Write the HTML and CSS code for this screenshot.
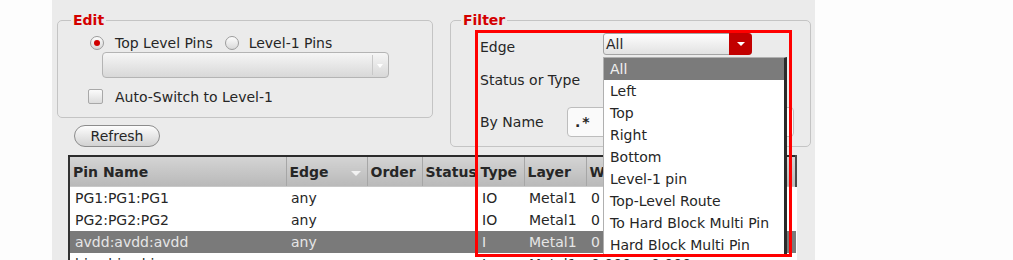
FILE: index.html
```html
<!DOCTYPE html>
<html lang="en">
<head>
  <meta charset="UTF-8" />
  <meta name="viewport" content="width=device-width, initial-scale=1.0"/>
  <title>Pin Editor</title>
  <link rel="stylesheet" href="styles.css">
</head>
<body>

<div class="app">
  <div class="top">
    <div class="left-col">
      <fieldset class="group edit">
        <legend>Edit</legend>
        <div class="radios">
          <span class="radio on"></span><span class="radio-label">Top Level Pins</span>
          <span class="radio second"></span><span class="radio-label second">Level-1 Pins</span>
        </div>
        <div class="combo plain"><span class="combo-arrow"></span></div>
        <div class="check-row"><span class="checkbox"></span>Auto-Switch to Level-1</div>
      </fieldset>
      <button class="btn">Refresh</button>
    </div>

    <fieldset class="group filter">
      <legend>Filter</legend>
      <div class="frow edge-row">
        <span class="flabel">Edge</span>
        <div class="red-combo">All<span class="red-btn"></span></div>
      </div>
      <div class="frow status-row"><span class="flabel">Status or Type</span></div>
      <div class="frow name-row">
        <span class="flabel">By Name</span>
        <div class="name-input">.*</div>
      </div>
    </fieldset>
  </div>

  <table class="pins">
    <colgroup>
      <col style="width:217px"><col style="width:81px"><col style="width:55px">
      <col style="width:55px"><col style="width:47px"><col style="width:62px">
      <col style="width:60px"><col style="width:60px"><col style="width:90px">
    </colgroup>
    <thead>
      <tr>
        <th>Pin Name</th>
        <th>Edge<span class="sort"></span></th>
        <th>Order</th>
        <th>Status</th>
        <th>Type</th>
        <th>Layer</th>
        <th>Width</th>
        <th>Depth</th>
        <th class="last">Spacer</th>
      </tr>
    </thead>
    <tbody>
      <tr><td>PG1:PG1:PG1</td><td>any</td><td></td><td></td><td>IO</td><td>Metal1</td><td>0</td><td></td><td></td></tr>
      <tr><td>PG2:PG2:PG2</td><td>any</td><td></td><td></td><td>IO</td><td>Metal1</td><td>0</td><td></td><td></td></tr>
      <tr class="sel"><td>avdd:avdd:avdd</td><td>any</td><td></td><td></td><td>I</td><td>Metal1</td><td>0</td><td></td><td></td></tr>
      <tr><td>bias:bias:bias</td><td>any</td><td></td><td></td><td>I</td><td>Metal1</td><td>0.000</td><td>0.000</td><td></td></tr>
    </tbody>
  </table>

  <ul class="popup">
    <li class="active">All</li>
    <li>Left</li>
    <li>Top</li>
    <li>Right</li>
    <li>Bottom</li>
    <li>Level-1 pin</li>
    <li>Top-Level Route</li>
    <li>To Hard Block Multi Pin</li>
    <li>Hard Block Multi Pin</li>
  </ul>

  <div class="highlight"></div>
</div>

</body>
</html>
```

FILE: styles.css
```css
body {
  margin: 0;
  background: #fdfdfd;
  font-family: "DejaVu Sans", sans-serif;
  font-size: 14px;
  color: #262626;
}

.app {
  position: relative;
  margin-left: 52px;
  width: 763px;
  height: 260px;
  background: #ebebeb;
  overflow: hidden;
}

.top {
  display: flex;
  gap: 17px;
  height: 147px;
  padding: 12px 0 0 5px;
  box-sizing: border-box;
}

.left-col {
  width: 376px;
}

/* group boxes */
.group {
  margin: 0;
  border: 1px solid #c4c4c4;
  border-radius: 5px;
}
.group legend {
  padding: 0 2px;
  color: #d40000;
  font-weight: bold;
  line-height: 16px;
}

.edit {
  padding: 6px 0 12px 13px;
}
.filter {
  width: 361px;
  box-sizing: border-box;
  padding: 5px 15px 7px 10px;
}

/* radios */
.radios {
  display: flex;
  align-items: center;
  height: 18px;
}
.radio {
  width: 14px;
  height: 14px;
  box-sizing: border-box;
  border: 1px solid #9c9c9c;
  border-radius: 50%;
  background: linear-gradient(#fdfdfd, #d9d9d9);
  margin-left: 19px;
  position: relative;
}
.radio.second { margin-left: 12px; }
.radio.on::after {
  content: "";
  position: absolute;
  left: 3px;
  top: 3px;
  width: 6px;
  height: 6px;
  border-radius: 50%;
  background: #d00000;
}
.radio-label { margin-left: 11px; }
.radio-label.second { margin-left: 10px; }

/* edit combo */
.combo {
  position: relative;
  margin-left: 31px;
  width: 287px;
  height: 26px;
  box-sizing: border-box;
  border: 1px solid #b4b4b4;
  border-radius: 4px;
  background: linear-gradient(#f6f6f6, #d8d8d8);
}
.combo-arrow {
  position: absolute;
  right: 0;
  top: 2px;
  width: 15px;
  height: 20px;
  border-left: 1px solid #c8c8c8;
}
.combo-arrow::after {
  content: "";
  position: absolute;
  left: 4px;
  top: 9px;
  border-left: 3px solid transparent;
  border-right: 3px solid transparent;
  border-top: 4px solid #fff;
}

.check-row {
  display: flex;
  align-items: center;
  height: 17px;
  margin-top: 10px;
}
.checkbox {
  width: 15px;
  height: 15px;
  box-sizing: border-box;
  border: 1px solid #a8a8a8;
  border-radius: 2px;
  background: linear-gradient(#fbfbfb, #dcdcdc);
  margin: 0 12px 0 17px;
}

.btn {
  display: block;
  margin: 7px 0 0 17px;
  width: 86px;
  height: 22px;
  padding: 0;
  border: 1px solid #8c8c8c;
  border-radius: 11px;
  background: linear-gradient(#fdfdfd, #d2d2d2);
  font-family: inherit;
  font-size: 14px;
  color: #262626;
}

/* filter rows */
.frow {
  display: flex;
}
.flabel {
  width: 87px;
  margin-left: 19px;
  flex: none;
  white-space: nowrap;
}
.edge-row {
  height: 22px;
  align-items: flex-start;
}
.edge-row .flabel { margin-top: 6px; }
.status-row {
  height: 22px;
  margin-top: 14px;
  align-items: center;
}
.name-row {
  height: 30px;
  margin-top: 16px;
  align-items: center;
}

.red-combo {
  position: relative;
  margin-left: 36px;
  width: 149px;
  height: 22px;
  box-sizing: border-box;
  padding-left: 2px;
  line-height: 21px;
  border: 1px solid #a4a4a4;
  border-radius: 3px;
  background: linear-gradient(#fdfdfd, #e2e2e2);
}
.red-btn {
  position: absolute;
  right: -1px;
  top: -1px;
  width: 23px;
  height: 22px;
  background: #c20000;
  border-radius: 0 4px 4px 0;
}
.red-btn::after {
  content: "";
  position: absolute;
  left: 8px;
  top: 9px;
  border-left: 4px solid transparent;
  border-right: 4px solid transparent;
  border-top: 4px solid #fff;
}

.name-input {
  width: 227px;
  height: 30px;
  box-sizing: border-box;
  padding-left: 7px;
  line-height: 28px;
  letter-spacing: 2px;
  border: 1px solid #bdbdbd;
  border-radius: 4px;
  background: #fafafa;
  font-weight: bold;
}

/* table */
.pins {
  margin: 8px 0 0 16px;
  width: 729px;
  table-layout: fixed;
  border-collapse: collapse;
  border-top: 2px solid #2b2b2b;
  border-left: 2px solid #333;
  background: #fff;
}
.pins th {
  height: 29px;
  padding: 0 0 0 3px;
  text-align: left;
  white-space: nowrap;
  overflow: hidden;
  background: linear-gradient(#d4d4d4, #b9b9b9);
  border-right: 1px solid #a6a6a6;
  border-left: 1px solid #dcdcdc;
  border-bottom: 1px solid #c8c8c8;
}
.pins th:first-child { border-left: none; }
.pins th.last { border-right: 2px solid #4a4a4a; }
.sort {
  float: right;
  margin: 7px 6px 0 0;
  border-left: 5px solid transparent;
  border-right: 5px solid transparent;
  border-top: 5px solid #f2f2f2;
}
.pins td {
  height: 22px;
  padding: 0 0 0 5px;
  white-space: nowrap;
  overflow: hidden;
}
.pins .sel td {
  background: #7a7a7a;
  color: #e6e6e6;
}

/* dropdown list over the table */
.popup {
  position: absolute;
  left: 551px;
  top: 57px;
  width: 184px;
  margin: 0;
  padding: 0;
  list-style: none;
  box-sizing: border-box;
  background: #fff;
  border-top: 1px solid #b0b0b0;
  border-left: 1px solid #b0b0b0;
  border-right: 3px solid #2a2a2a;
}
.popup li {
  height: 22px;
  line-height: 22px;
  padding-left: 6px;
  white-space: nowrap;
}
.popup li.active {
  background: #7b7b7b;
  color: #f0f0f0;
}

.highlight {
  position: absolute;
  left: 423px;
  top: 30px;
  width: 317px;
  height: 227px;
  box-sizing: border-box;
  border: 3px solid #ff0000;
}
```
